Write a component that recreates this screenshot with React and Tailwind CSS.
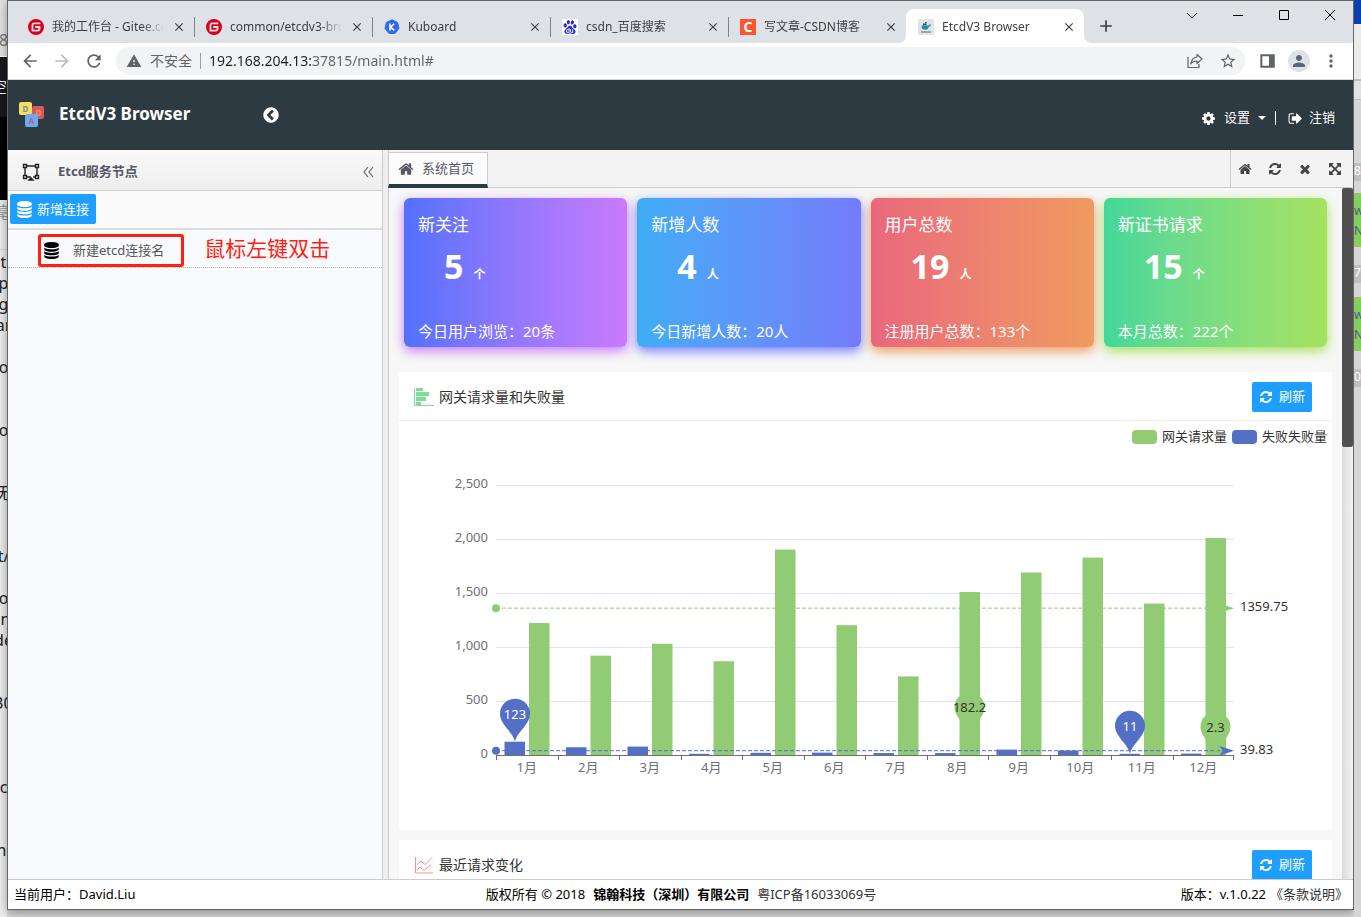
import {
  MdArrowBack,
  MdArrowForward,
  MdRefresh,
  MdWarning,
  MdStarBorder,
  MdMoreVert,
  MdPerson,
  MdClose,
  MdAdd,
} from 'react-icons/md';
import { SiGitee, SiBaidu } from 'react-icons/si';

// Font Awesome 4 glyphs, all on a 1792 grid
const glyphs = {
  refresh:
    'M1639 1056q0 5-1 7-64 268-268 434.5t-478 166.5q-146 0-282.5-55t-243.5-157l-129 129q-19 19-45 19t-45-19-19-45v-448q0-26 19-45t45-19h448q26 0 45 19t19 45-19 45l-137 137q71 66 161 102t187 36q134 0 250-65t186-179q11-17 53-117 8-23 30-23h192q13 0 22.5 9.5t9.5 22.5zm25-800v448q0 26-19 45t-45 19h-448q-26 0-45-19t-19-45 19-45l138-138q-148-137-349-137-134 0-250 65t-186 179q-11 17-53 117-8 23-30 23h-199q-13 0-22.5-9.5t-9.5-22.5v-7q65-268 270-434.5t480-166.5q146 0 284 55.5t245 156.5l130-129q19-19 45-19t45 19 19 45z',
  database:
    'M896 768q237 0 443-43t325-127v170q0 69-103 128t-280 93.5-385 34.5-385-34.5-280-93.5-103-128v-170q119 84 325 127t443 43zm0 768q237 0 443-43t325-127v170q0 69-103 128t-280 93.5-385 34.5-385-34.5-280-93.5-103-128v-170q119 84 325 127t443 43zm0-384q237 0 443-43t325-127v170q0 69-103 128t-280 93.5-385 34.5-385-34.5-280-93.5-103-128v-170q119 84 325 127t443 43zm0-1152q208 0 385 34.5t280 93.5 103 128v128q0 69-103 128t-280 93.5-385 34.5-385-34.5-280-93.5-103-128v-128q0-69 103-128t280-93.5 385-34.5z',
  home: 'M1472 992v480q0 26-19 45t-45 19h-384v-384h-256v384h-384q-26 0-45-19t-19-45v-480q0-1 .5-3t.5-3l575-474 575 474q1 2 1 6zm223-69l-62 74q-8 9-21 11h-3q-13 0-21-7l-692-577-692 577q-12 8-24 7-13-2-21-11l-62-74q-8-10-7-23.5t11-21.5l719-599q32-26 76-26t76 26l244 204v-195q0-14 9-23t23-9h192q14 0 23 9t9 23v408l219 182q10 8 11 21.5t-7 23.5z',
  times:
    'M1490 1322q0 40-28 68l-136 136q-28 28-68 28t-68-28l-294-294-294 294q-28 28-68 28t-68-28l-136-136q-28-28-28-68t28-68l294-294-294-294q-28-28-28-68t28-68l136-136q28-28 68-28t68 28l294 294 294-294q28-28 68-28t68 28l136 136q28 28 28 68t-28 68l-294 294 294 294q28 28 28 68z',
  expand:
    'M1411 541l-355 355 355 355 144-144q29-31 70-14 39 17 39 59v448q0 26-19 45t-45 19h-448q-42 0-59-40-17-39 14-69l144-144-355-355-355 355 144 144q31 30 14 69-17 40-59 40h-448q-26 0-45-19t-19-45v-448q0-42 40-59 39-17 69 14l144 144 355-355-355-355-144 144q-19 19-45 19-12 0-24-5-40-17-40-59v-448q0-26 19-45t45-19h448q42 0 59 40 17 39-14 69l-144 144 355 355 355-355-144-144q-31-30-14-69 17-40 59-40h448q26 0 45 19t19 45v448q0 42-39 59-13 5-25 5-26 0-45-19z',
  cog: 'M1152 896q0-106-75-181t-181-75-181 75-75 181 75 181 181 75 181-75 75-181zm512-109v222q0 12-8 23t-20 13l-185 28q-19 54-39 91 35 50 107 138 10 12 10 25t-9 23q-27 37-99 108t-94 71q-12 0-26-9l-138-108q-44 23-91 38-16 136-29 186-7 28-36 28h-222q-14 0-24.5-8.5t-11.5-21.5l-28-184q-49-16-90-37l-141 107q-10 9-25 9-14 0-25-11-126-114-165-168-7-10-7-23 0-12 8-23 15-21 51-66.5t54-70.5q-27-50-41-99l-183-27q-13-2-21-12.5t-8-23.5v-222q0-12 8-23t19-13l186-28q14-46 39-92-40-57-107-138-10-12-10-24 0-10 9-23 26-36 98.5-107.5t94.5-71.5q13 0 26 10l138 107q44-23 91-38 16-136 29-186 7-28 36-28h222q14 0 24.5 8.5t11.5 21.5l28 184q49 16 90 37l142-107q9-9 24-9 13 0 25 10 129 119 165 170 7 8 7 22 0 12-8 23-15 21-51 66.5t-54 70.5q26 50 41 98l183 28q13 2 21 12.5t8 23.5z',
  signOut:
    'M704 1440q0 4 1 20t.5 26.5-3 23.5-10 19.5-20.5 6.5h-320q-119 0-203.5-84.5t-84.5-203.5v-704q0-119 84.5-203.5t203.5-84.5h320q13 0 22.5 9.5t9.5 22.5q0 4 1 20t.5 26.5-3 23.5-10 19.5-20.5 6.5h-320q-66 0-113 47t-47 113v704q0 66 47 113t113 47h312l11.5 1 11.5 3 8 5.5 7 9 2 13.5zm928-544q0 26-19 45l-544 544q-19 19-45 19t-45-19-19-45v-288h-448q-26 0-45-19t-19-45v-384q0-26 19-45t45-19h448v-288q0-26 19-45t45-19 45 19l544 544q19 19 19 45z',
  circleLeft:
    'M1037 1395l102-102q19-19 19-45t-19-45l-307-307 307-307q19-19 19-45t-19-45l-102-102q-19-19-45-19t-45 19l-454 454q-19 19-19 45t19 45l454 454q19 19 45 19t45-19zm627-499q0 209-103 385.5t-279.5 279.5-385.5 103-385.5-103-279.5-279.5-103-385.5 103-385.5 279.5-279.5 385.5-103 385.5 103 279.5 279.5 103 385.5z',
};

function Glyph({ name, className }) {
  return (
    <svg viewBox="0 0 1792 1792" fill="currentColor" className={`shrink-0 ${className}`}>
      <path d={glyphs[name]} />
    </svg>
  );
}

const KuboardIcon = () => (
  <svg viewBox="0 0 16 16" className="size-4">
    <path d="M8 .8l5.6 2.6 1.4 6-3.9 5H4.9L1 9.400l1.400-6z" fill="#2f6be6" stroke="#2f6be6" strokeWidth="1" strokeLinejoin="round" />
    <path d="M6 4.500v7M10.200 4.800L6.500 8.200l3.900 3.200" stroke="#fff" strokeWidth="1.500" fill="none" />
  </svg>
);

const WhaleIcon = () => (
  <svg viewBox="0 0 16 16" className="size-4">
    <path d="M0 0h16v16H0z" fill="#e4e4e4" />
    <path d="M3.500 6.500h6.500c1 0 1.600-.5 1.800-1.400.8.300 1 .8.900 1.300-.3.700-1 1-1.700 1-.5 2.200-2 3.400-4.200 3.400-2.200 0-3.500-1.500-3.300-4.300z" fill="#1f8fb0" />
    <path d="M5 4.500h3.500v1.800H5zM7 3h1.500v1.200H7z" fill="#2e5566" />
    <path d="M3 13h10" stroke="#7c8a90" strokeWidth="1.400" />
  </svg>
);

const tabs = [
  { title: '我的工作台 - Gitee.com', icon: <SiGitee className="size-4 text-[#d9001b]" /> },
  { title: 'common/etcdv3-browser', icon: <SiGitee className="size-4 text-[#d9001b]" /> },
  { title: 'Kuboard', icon: <KuboardIcon /> },
  { title: 'csdn_百度搜索', icon: <SiBaidu className="size-4 bg-white p-px text-[#2529d8]" /> },
  {
    title: '写文章-CSDN博客',
    icon: <span className="flex size-4 items-center justify-center bg-[#fc5531] text-sm font-bold text-white">C</span>,
  },
  { title: 'EtcdV3 Browser', icon: <WhaleIcon />, active: true },
];

function BrowserTabs() {
  return (
    <div className="flex h-[42px] shrink-0 bg-[#dee1e6] pl-2">
      <div className="flex min-w-0 flex-1 items-end">
        {tabs.map((tab, i) => (
          <div
            key={tab.title}
            className={`relative flex h-[34px] min-w-0 max-w-[178px] flex-1 items-center gap-2 pt-px pr-2 pl-3 text-xs text-[#3c4043] ${
              tab.active ? 'rounded-t-lg bg-white' : ''
            }`}
          >
            {tab.active && (
              <>
                <span className="absolute bottom-0 -left-2 size-2 bg-[radial-gradient(circle_at_0_0,transparent_8px,white_8px)]" />
                <span className="absolute -right-2 bottom-0 size-2 bg-[radial-gradient(circle_at_100%_0,transparent_8px,white_8px)]" />
              </>
            )}
            <span className="shrink-0">{tab.icon}</span>
            <span className="min-w-0 flex-1 overflow-hidden whitespace-nowrap [mask-image:linear-gradient(to_right,black_80%,transparent)]">
              {tab.title}
            </span>
            <button aria-label="关闭标签页" className="shrink-0">
              <MdClose className="size-[14px]" />
            </button>
            {i < tabs.length - 2 && <span className="absolute top-2 -right-px h-5 w-px bg-[#808387]" />}
          </div>
        ))}
        <button aria-label="新标签页" className="flex h-[34px] w-11 shrink-0 items-center justify-center text-[#3c4043]">
          <MdAdd className="size-5" />
        </button>
      </div>
      <div className="flex h-7 shrink-0 text-black">
        {[
          ['搜索标签页', 'M1 4l5 5 5-5'],
          ['最小化', 'M1 6.500h10'],
          ['最大化', 'M1.500 1.500h9v9h-9z'],
          ['关闭', 'M1 1l10 10M11 1L1 11'],
        ].map(([label, d]) => (
          <button key={label} aria-label={label} className="flex w-[46px] items-center justify-center">
            <svg viewBox="0 0 12 12" className="size-3" fill="none" stroke="currentColor">
              <path d={d} />
            </svg>
          </button>
        ))}
      </div>
    </div>
  );
}

function AddressBar() {
  return (
    <div className="flex h-[37px] shrink-0 items-center border-b border-[#d5d7da] bg-white px-3 text-[#5f6368]">
      <div className="flex w-24 shrink-0 gap-3">
        <button aria-label="后退">
          <MdArrowBack className="size-5" />
        </button>
        <button aria-label="前进" className="text-[#babcbe]">
          <MdArrowForward className="size-5" />
        </button>
        <button aria-label="重新加载">
          <MdRefresh className="size-5" />
        </button>
      </div>
      <div className="flex h-7 min-w-0 flex-1 items-center rounded-full bg-[#f1f3f4] pr-2 pl-[10px]">
        <MdWarning className="size-4 shrink-0" />
        <span className="ml-2 shrink-0 text-sm">不安全</span>
        <span className="mx-2 h-4 w-px bg-[#9aa0a6]" />
        <input
          aria-label="地址"
          defaultValue="192.168.204.13:37815/main.html#"
          className="min-w-0 flex-1 bg-[linear-gradient(to_right,#202124_104px,#5f6368_104px)] bg-clip-text text-sm text-transparent outline-none"
        />
        <div className="flex shrink-0 gap-4">
          <button aria-label="分享">
            <svg viewBox="0 0 16 16" className="size-4" fill="none" stroke="currentColor" strokeWidth="1.200">
              <path d="M1 4v10.500h11V11" />
              <path d="M10 1.500L15 6l-5 4.500V8C7 8 5 9 3.800 11 4.200 7.500 6.500 4.500 10 4z" strokeLinejoin="round" />
            </svg>
          </button>
          <button aria-label="为此标签页添加书签">
            <MdStarBorder className="size-[18px]" />
          </button>
        </div>
      </div>
      <div className="ml-3 flex shrink-0 items-center gap-[11px]">
        <button aria-label="侧边栏">
          <svg viewBox="0 0 18 18" className="size-5" fill="currentColor">
            <path fillRule="evenodd" d="M3 3h13v12H3zM4.800 4.800v8.400h6V4.800z" />
          </svg>
        </button>
        <button aria-label="用户" className="flex size-[22px] items-center justify-center rounded-full bg-[#dee1e6] text-[#5b6478]">
          <MdPerson className="size-[18px]" />
        </button>
        <button aria-label="更多">
          <MdMoreVert className="size-5" />
        </button>
      </div>
    </div>
  );
}

function Logo() {
  return (
    <svg viewBox="0 0 28 28" className="size-7" fontSize="8" fontWeight="bold" textAnchor="middle">
      <rect x="14" y="5" width="12" height="13" rx="2" fill="#d95763" />
      <text x="20.500" y="15" fill="#f2a03c">D</text>
      <rect x="1" y="1" width="13" height="13" rx="2" fill="#f7dd63" />
      <text x="7.500" y="10.500" fill="#6a9a94">D</text>
      <rect x="7" y="13" width="13" height="13" rx="2" fill="#6aabf5" />
      <text x="13.500" y="23" fill="#c8577c">A</text>
    </svg>
  );
}

function Header() {
  return (
    <header className="flex h-[70px] shrink-0 items-center bg-[#2d3a42] pr-[18px] pl-[10px] text-white">
      <Logo />
      <h1 className="ml-[13px] pb-[2px] text-[17px] font-bold">EtcdV3 Browser</h1>
      <button aria-label="收起菜单" className="ml-[72px]">
        <Glyph name="circleLeft" className="size-[18px]" />
      </button>
      <div className="ml-auto flex items-center gap-2 pt-[6px] text-[13px]">
        <button className="flex items-center gap-2">
          <Glyph name="cog" className="size-[15px]" />
          设置
          <span className="border-x-4 border-t-4 border-x-transparent border-t-white" />
        </button>
        <span className="mx-px h-[14px] w-px bg-white" />
        <button className="ml-[3px] flex items-center gap-[6px]">
          <Glyph name="signOut" className="size-[15px]" />
          注销
        </button>
      </div>
    </header>
  );
}

function Sidebar() {
  return (
    <aside className="flex w-[375px] shrink-0 flex-col border-r border-[#ccc] bg-[#f9fafd]">
      <div className="flex h-[41px] items-center border-b border-[#d0d0d0] bg-linear-to-b from-[#f9f9f9] to-[#eee] pt-[3px] pr-1 pl-[14px] text-[#575765]">
        <svg viewBox="0 0 18 18" className="size-[18px]" fill="none" stroke="#222" strokeWidth="1.400">
          <path d="M5 3h8M5 14h4M3 5v7M15 5v7M11 14h2" />
          <path d="M1.500 1.500h3v3h-3zM13.500 1.500h3v3h-3zM1.500 12.500h3v3h-3zM13.500 12.500h3v3h-3z" />
          <path d="M7 17l2-2 2 2z" fill="#222" />
        </svg>
        <h2 className="ml-[18px] text-[13px] font-bold">Etcd服务节点</h2>
        <button aria-label="折叠面板" className="ml-auto p-1 text-[#666]">
          <svg viewBox="0 0 12 12" className="size-3" fill="none" stroke="currentColor" strokeWidth="1.200">
            <path d="M6 1L2 6l4 5M11 1L7 6l4 5" />
          </svg>
        </button>
      </div>
      <div className="border-b-2 border-[#ddd] bg-[#fafafa] px-[2px] pt-[3px] pb-1">
        <button className="flex h-[30px] items-center gap-1 rounded-xs bg-[#1e9fff] pt-px pr-[7px] pl-[6px] text-[13px] text-white">
          <Glyph name="database" className="size-[17px]" />
          新增连接
        </button>
      </div>
      <div className="flex h-[38px] items-center border-b border-dotted border-[#bbb] pt-1 pl-[30px]">
        <button className="flex h-[33px] items-center gap-[13px] rounded-[3px] border-3 border-[#ff1e10] pr-[17px] pl-[2px] text-[13px] text-[#555]">
          <Glyph name="database" className="size-[17px] text-black" />
          新建etcd连接名
        </button>
        <span className="ml-5 self-start text-[21px] leading-7 text-[#ff1e10]">鼠标左键双击</span>
      </div>
    </aside>
  );
}

const stats = [
  {
    title: '新关注',
    value: 5,
    unit: '个',
    note: '今日用户浏览：20条',
    style: 'from-[#5171fd] to-[#c97afd] shadow-[0_4px_12px_#c97afd]',
  },
  {
    title: '新增人数',
    value: 4,
    unit: '人',
    note: '今日新增人数：20人',
    style: 'from-[#3dadf6] to-[#737bfc] shadow-[0_4px_12px_#737bfc]',
  },
  {
    title: '用户总数',
    value: 19,
    unit: '人',
    note: '注册用户总数：133个',
    style: 'from-[#ea677c] to-[#ef9b5f] shadow-[0_4px_12px_#ef9b5f]',
  },
  {
    title: '新证书请求',
    value: 15,
    unit: '个',
    note: '本月总数：222个',
    style: 'from-[#42d79b] to-[#a6e25f] shadow-[0_4px_12px_#a6e25f]',
  },
];

function StatCard({ title, value, unit, note, style }) {
  return (
    <section className={`flex h-[149px] flex-col rounded-md bg-linear-to-r px-[14px] pt-[15px] pb-1 text-white ${style}`}>
      <h3 className="text-[17px] leading-6">{title}</h3>
      <p className="flex items-baseline gap-[10px] pt-[9px] pl-[26px] font-bold">
        <span className="text-[34px] leading-10">{value}</span>
        <span className="text-xs">{unit}</span>
      </p>
      <p className="mt-auto text-[15px] leading-6">{note}</p>
    </section>
  );
}

const failures = [123, 72, 78, 11, 20, 22, 18, 18, 50, 42, 11, 13];
const requests = [1222, 920, 1030, 868, 1902, 1202, 728, 1509, 1690, 1828, 1402, 2010];

const plot = { left: 97, right: 835, top: 32, bottom: 302 };
const step = (plot.right - plot.left) / 12;
const yOf = (v) => plot.bottom - (v * (plot.bottom - plot.top)) / 2500;

function Pin({ x, y, label, fill, color }) {
  return (
    <g>
      <path
        d={`M${x} ${y}C${x - 2} ${y - 10} ${x - 15} ${y - 17} ${x - 15} ${y - 28}A15 15 0 0 1 ${x + 15} ${y - 28}C${x + 15} ${y - 17} ${x + 2} ${y - 10} ${x} ${y}z`}
        fill={fill}
      />
      <text x={x} y={y - 23} textAnchor="middle" fill={color}>
        {label}
      </text>
    </g>
  );
}

function MarkLine({ value, color }) {
  const y = yOf(value);
  return (
    <g>
      <path d={`M${plot.left} ${y}H${plot.right - 8}`} stroke={color} strokeDasharray="4 2" />
      <circle cx={plot.left} cy={y} r="4" fill={color} />
      <path d={`M${plot.right} ${y}l-15-5 4 5-4 5z`} fill={color} />
      <text x={plot.right + 6} y={y + 3} fill="#333">
        {value}
      </text>
    </g>
  );
}

function RequestChart() {
  return (
    <svg viewBox="0 0 933 377" className="block h-auto w-full" fontSize="13">
      {[0, 500, 1000, 1500, 2000, 2500].map((v) => (
        <g key={v}>
          <path d={`M${plot.left} ${yOf(v) + 0.5}H${plot.right}`} stroke="#e0e6f1" />
          <text x={plot.left - 8} y={yOf(v) + 3} textAnchor="end" fill="#6e7079">
            {v.toLocaleString('en-US')}
          </text>
        </g>
      ))}
      {requests.map((v, i) => {
        const x = plot.left + i * step;
        return (
          <g key={i}>
            <rect x={x + 8.5} y={yOf(failures[i])} width="20.500" height={plot.bottom - yOf(failures[i])} fill="#5470c6" />
            <rect x={x + 33} y={yOf(v)} width="20.500" height={plot.bottom - yOf(v)} fill="#91cc75" />
            <path d={`M${Math.round(x) + 0.5} ${plot.bottom}v5`} stroke="#6e7079" />
            <text x={x + step / 2} y={plot.bottom + 17} textAnchor="middle" fill="#6e7079">
              {i + 1}月
            </text>
          </g>
        );
      })}
      <path d={`M${plot.left} ${plot.bottom + 0.5}H${plot.right}M${plot.right - 0.5} ${plot.bottom}v5`} stroke="#6e7079" />
      <MarkLine value={1359.75} color="#91cc75" />
      <MarkLine value={39.83} color="#5470c6" />
      <Pin x={plot.left + 19} y={yOf(123)} label="123" fill="#5470c6" color="#fff" />
      <Pin x={plot.left + step * 10 + 19} y={yOf(11)} label="11" fill="#5470c6" color="#fff" />
      <Pin x={plot.left + step * 7 + 43} y={yOf(182.2)} label="182.2" fill="#91cc75" color="#333" />
      <Pin x={plot.left + step * 11 + 43} y={yOf(2.3)} label="2.3" fill="#91cc75" color="#333" />
    </svg>
  );
}

function Panel({ icon, title, children }) {
  return (
    <section className="shrink-0 rounded-xs bg-white">
      <div className="flex h-[49px] items-center border-b border-[#eee] pt-px pr-5 pl-[15px]">
        {icon}
        <h3 className="ml-[5px] text-sm text-[#333]">{title}</h3>
        <button className="ml-auto flex h-[30px] items-center gap-[6px] rounded-xs bg-[#1e9fff] px-[7px] text-[13px] text-white">
          <Glyph name="refresh" className="size-[14px]" />
          刷新
        </button>
      </div>
      {children}
    </section>
  );
}

const tools = [
  ['主页', 'home'],
  ['刷新', 'refresh'],
  ['关闭', 'times'],
  ['全屏', 'expand'],
];

function Main() {
  return (
    <main className="ml-[5px] flex min-w-0 flex-1 flex-col border-l border-[#ccc] bg-[#f7f7f7]">
      <div className="flex h-[38px] shrink-0 bg-[#f3f3f3]">
        <div className="-ml-px flex min-w-0 flex-1 items-end border-b border-[#ccc]">
          <button className="-mb-px flex h-9 w-[100px] items-center gap-2 border border-b-4 border-[#ccc] border-b-[#2d3a42] bg-[#fcfcfc] pt-px pl-[9px] text-[13px] text-[#575765]">
            <Glyph name="home" className="size-4" />
            系统首页
          </button>
        </div>
        <div className="flex items-center gap-4 border-b border-l border-[#ccc] pr-[11px] pl-[7px] text-[#444]">
          {tools.map(([label, icon]) => (
            <button key={label} aria-label={label}>
              <Glyph name={icon} className="size-[14px]" />
            </button>
          ))}
        </div>
      </div>
      <div className="flex min-h-0 flex-1">
        <div className="flex min-w-0 flex-1 flex-col gap-[10px] overflow-hidden px-[10px] pt-[10px]">
          <div className="mb-[15px] grid shrink-0 grid-cols-4 gap-[10px] px-[5px]">
            {stats.map((s) => (
              <StatCard key={s.title} {...s} />
            ))}
          </div>
          <Panel
            title="网关请求量和失败量"
            icon={
              <svg viewBox="0 0 20 20" className="size-5" fill="#7edc96">
                <path d="M0 1h1v17h19v1H0zM2 1h7v3H2zM2 5h13v4H2zM2 10h10v4H2zM2 15h5v3H2z" />
              </svg>
            }
          >
            <div className="flex h-8 items-center justify-end gap-[5px] pr-[5px] text-[13px] text-[#333]">
              <span className="h-[14px] w-[25px] rounded-sm bg-[#91cc75]" />
              网关请求量
              <span className="h-[14px] w-[25px] rounded-sm bg-[#5470c6]" />
              失败失败量
            </div>
            <RequestChart />
          </Panel>
          <Panel
            title="最近请求变化"
            icon={
              <svg viewBox="0 0 20 20" className="size-5" fill="none" stroke="#f5918f">
                <path d="M1.500 2v16H19" />
                <path d="M3 10l4-4 4 3.500L18 2.500M3 15l3-3 4 3.500 7-6" />
              </svg>
            }
          />
        </div>
        <div className="w-[11px] shrink-0 bg-linear-to-r from-[#dcdcdc] to-[#f3f3f3]">
          <div className="h-[259px] rounded-xs bg-[#505050]" />
        </div>
      </div>
    </main>
  );
}

function Footer() {
  return (
    <footer className="flex h-[30px] shrink-0 items-center border-t border-[#ccc] bg-white pt-px pr-[5px] pl-[6px] text-[13px] text-black">
      <span className="flex-1">当前用户：David.Liu</span>
      <span className="flex gap-2">
        <span>版权所有 © 2018</span>
        <b>锦翰科技（深圳）有限公司</b>
        <a href="#icp" className="text-[#333]">
          粤ICP备16033069号
        </a>
      </span>
      <span className="flex flex-1 justify-end gap-1">
        版本：v.1.0.22
        <a href="#terms" className="text-[#333]">
          《条款说明》
        </a>
      </span>
    </footer>
  );
}

// Slivers of the windows that lie behind the browser
const editorLines = [
  't', 'p', 'g', 'ar', '', 'o', '', '', 'o', '', '', '无', '', '', 't/', '',
  'o', 'in', 'de', '', '', '30', '', '', '', 'c', '', '', 'n.',
];

function LeftEdge() {
  return (
    <div className="w-[7px] shrink-0 overflow-hidden bg-[#efeff0] text-base text-[#222]">
      <div className="flex h-[57px] items-end justify-center border-b border-white bg-[#e4e4e5] pb-1 text-[#777]">8</div>
      <div className="flex h-[60px] items-center justify-end bg-[#191a1e] text-white">空</div>
      <div className="h-[83px] bg-black" />
      <div className="mb-px flex h-[50px] items-start justify-center border-b border-[#ddd] text-[#999]">亳</div>
      {editorLines.map((line, i) => (
        <div key={i} className="flex h-[21px] items-center justify-center whitespace-nowrap">
          {line}
        </div>
      ))}
    </div>
  );
}

function RightEdge() {
  return (
    <div className="w-[7px] shrink-0 overflow-hidden bg-[#d6d6d6] text-xs text-[#4a5a80]">
      <div className="h-6 bg-[#0a3fae]" />
      <div className="h-14 border-b border-[#bbb] bg-[#ebebeb]" />
      <div className="h-5 border-y border-[#bbb] bg-[#e2e2e2]" />
      <div className="mt-[63px] h-[18px] bg-[#bfbfbf] text-white">8</div>
      <div className="mt-3 h-[54px] bg-[#86cd5f] pt-2 leading-5">w No</div>
      <div className="mt-[18px] h-[18px] bg-[#bfbfbf] text-white">7</div>
      <div className="mt-[14px] h-[54px] bg-[#86cd5f] pt-2 leading-5">w No</div>
      <div className="mt-[18px] h-[18px] bg-[#bfbfbf] text-white">0</div>
    </div>
  );
}

export default function App() {
  return (
    <div className="flex h-screen overflow-hidden bg-[#d8d8d8] font-['Noto_Sans','Noto_Sans_CJK_SC',sans-serif]">
      <LeftEdge />
      <div className="flex min-w-0 flex-1 flex-col pb-[7px]">
        <div className="flex min-h-0 flex-1 flex-col border border-[#666] shadow-[0_2px_10px_#0006]">
          <BrowserTabs />
          <AddressBar />
          <Header />
          <div className="flex min-h-0 flex-1 bg-[#eee]">
            <Sidebar />
            <Main />
          </div>
          <Footer />
        </div>
      </div>
      <RightEdge />
    </div>
  );
}
